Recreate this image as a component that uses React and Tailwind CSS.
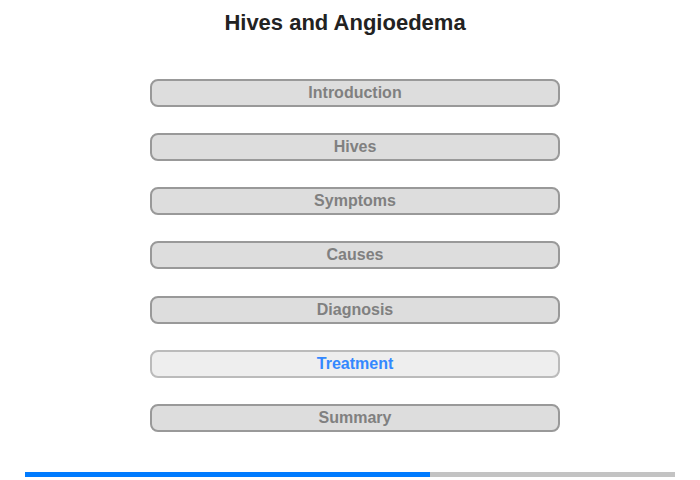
export default function App() {
  const items = ["Introduction", "Hives", "Symptoms", "Causes", "Diagnosis", "Treatment", "Summary"];
  return (
    <div className="w-[700px] h-[480px] bg-white flex flex-col" style={{ fontFamily: '"Liberation Sans", Arial, sans-serif' }}>
      <div className="pt-[9px] h-[79px] w-[690px] text-center text-[22px] leading-[28px] font-bold text-[#222]">Hives and Angioedema</div>
      <div className="ml-[150px] flex flex-col">
        {items.map((t, i) => {
          const active = t === "Treatment";
          const mt = i === 0 ? "" : i === 4 ? "mt-[27px] " : "mt-[26px] ";
          return (
            <div
              key={t}
              className={
                mt +
                (active
                  ? "w-[410px] h-[28px] rounded-[8px] border-2 border-[#bbbbbb] bg-[#eeeeee] text-[#3388ff] text-[16px] leading-[24px] font-bold text-center"
                  : "w-[410px] h-[28px] rounded-[8px] border-2 border-[#999999] bg-[#dddddd] text-[#808080] text-[16px] leading-[24px] font-bold text-center")
              }
            >
              {t}
            </div>
          );
        })}
      </div>
      <div className="ml-[25px] mt-[40px] w-[650px] h-[5px] bg-[#c3c3c3] flex">
        <div className="w-[405px] h-full bg-[#007bff]" />
      </div>
    </div>
  );
}
